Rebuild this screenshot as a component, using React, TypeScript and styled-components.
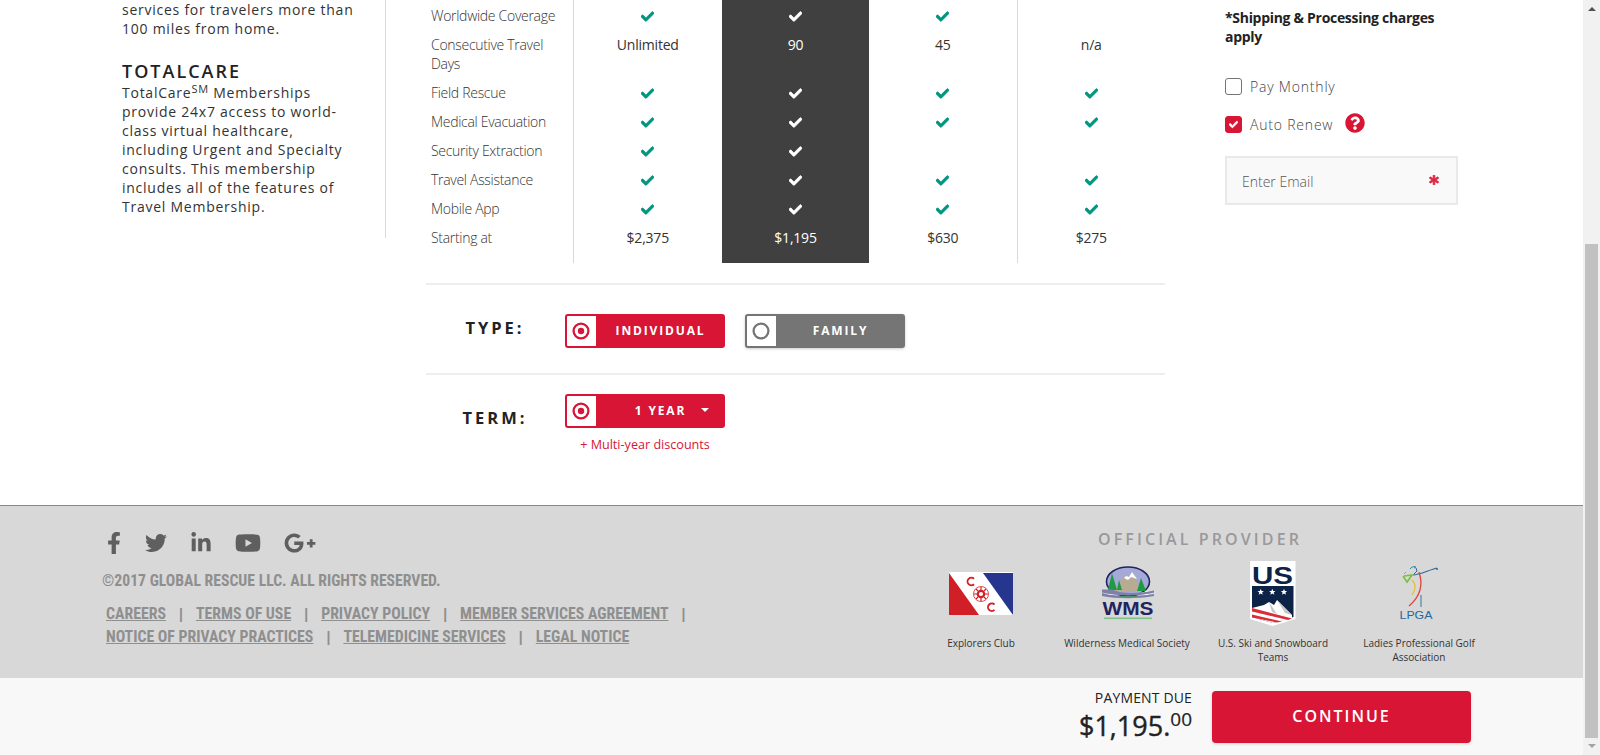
import React from "react";
import styled, { createGlobalStyle } from "styled-components";
import { FaCheck, FaFacebookF, FaTwitter, FaLinkedinIn, FaYoutube, FaGooglePlusG, FaQuestionCircle, FaAsterisk } from "react-icons/fa";

const Global = createGlobalStyle`
  html, body { margin: 0; padding: 0; height: 755px; overflow: hidden; background: #fff; }
  body { font-family: "Open Sans", "Liberation Sans", sans-serif; color: #333; }
  * { box-sizing: border-box; }
`;

const Shell = styled.div`display: flex; width: 1600px; height: 755px; overflow: hidden;`;
const Page = styled.div`display: flex; flex-direction: column; width: 1583px; height: 755px;`;
const Content = styled.main`display: flex; height: 505px; padding-left: 122px; flex: none;`;

const Sidebar = styled.aside`
  width: 264px; height: 238px; padding-right: 27px; border-right: 1px solid #d9d9d9;
  font-size: 14px; line-height: 19px; letter-spacing: 0.75px; color: #333; flex: none;
`;
const SideIntro = styled.p`margin: -0.5px 0 21px;`;
const SideText = styled.p`margin: 0; padding-top: 0.5px;`;
const SideHeading = styled.h3`margin: 0; font-size: 18px; line-height: 24px; font-weight: 600; letter-spacing: 2px; color: #222;`;
const Sm = styled.sup`font-size: 11px; line-height: 0; vertical-align: 5px;`;

const Center = styled.section`width: 739px; margin-left: 40px; flex: none;`;
const Table = styled.table`width: 739px; border-collapse: collapse; table-layout: fixed; margin-bottom: 20px;`;
const Cell = styled.td<{ $dark?: boolean; $line?: boolean }>`
  padding: 4px 4px 6px; font-size: 14px; line-height: 19px; text-align: center; vertical-align: top; height: 29px; letter-spacing: -0.2px;
  color: ${p => (p.$dark ? "#fff" : "#333")};
  background: ${p => (p.$dark ? "#404040" : "transparent")};
  border-left: ${p => (p.$line ? "1px solid #d9d9d9" : "none")};
  svg {
    display: inline-block; vertical-align: -2px; color: ${p => (p.$dark ? "#fff" : "#00967f")};
    stroke: currentColor; stroke-width: 30px;
  }
  tr:first-child & { padding-top: 6px; }
  tr:last-child & { padding-bottom: 16px; }
`;
const LabelCell = styled(Cell)`text-align: left; font-weight: 300; padding-left: 5px; padding-right: 12px; letter-spacing: -0.3px;`;

const OptionRow = styled.div<{ $tall?: boolean }>`
  display: flex; border-top: 2px solid #eee; height: ${p => (p.$tall ? "132px" : "90px")};
  padding-top: ${p => (p.$tall ? "19px" : "29px")};
`;
const OptionLabel = styled.div<{ $drop: number }>`
  width: 139px; padding-right: 1px; padding-top: ${p => p.$drop}px; text-align: center; font-size: 16.5px; line-height: 24px;
  font-weight: 700; letter-spacing: 3px; color: #222;
`;
const Options = styled.div`display: flex; gap: 20px; align-items: flex-start;`;
const OptionStack = styled.div`display: flex; flex-direction: column; align-items: center;`;
const Pill = styled.div<{ $on?: boolean }>`
  display: flex; width: 160px; height: 34px; border-radius: 3px; border: 2px solid ${p => (p.$on ? "#d81535" : "#757575")};
  background: ${p => (p.$on ? "#d81535" : "#757575")}; color: #fff;
  font-size: 12px; font-weight: 700; letter-spacing: 1.85px; line-height: 30px;
  box-shadow: ${p => (p.$on ? "none" : "0 1px 3px rgba(0,0,0,.2)")};
`;
const PillMark = styled.span`width: 29px; height: 30px; background: #fff; display: flex; align-items: center; justify-content: center; flex: none; border-radius: 1px 0 0 1px; padding-right: 1px;`;
const PillText = styled.span`flex: 1; padding-left: 2px; text-align: center; display: flex; justify-content: center; align-items: center; position: relative;`;
const Caret = styled.span`
  position: absolute; right: 14px; top: 12px; width: 0; height: 0;
  border-left: 4px solid transparent; border-right: 4px solid transparent; border-top: 4px solid #fff;
`;
const Discount = styled.div`margin-top: 8px; font-size: 12.6px; line-height: 18px; color: #d81535;`;

const Aside = styled.aside`width: 233px; margin-left: 60px; flex: none; padding-top: 8px; font-size: 14px;`;
const Note = styled.p`margin: 0 0 31px; font-weight: 700; font-size: 14px; line-height: 19px; color: #222; letter-spacing: -0.3px;`;
const CheckRow = styled.div<{ $gap: number }>`display: flex; align-items: center; height: 19px; margin-bottom: ${p => p.$gap}px; font-weight: 300; letter-spacing: 0.8px; color: #444;`;
const Box = styled.span<{ $on?: boolean }>`
  width: 17px; height: 17px; border-radius: 3px; margin-right: 8px; flex: none; display: flex; align-items: center; justify-content: center;
  background: ${p => (p.$on ? "#d81535" : "#fff")}; border: 1px solid ${p => (p.$on ? "#d81535" : "#757575")}; color: #fff;
  svg { stroke: currentColor; stroke-width: 40px; }
`;
const Help = styled.span`display: flex; margin-left: 12px; margin-top: -4px; color: #d81535;`;
const EmailField = styled.div`
  display: flex; align-items: center; justify-content: space-between; width: 233px; height: 49px; padding: 2px 17px 0 15px;
  background: #f9f9f9; border: 2px solid #e9e9e9; font-size: 14px; font-weight: 300; color: #555;
  svg { color: #e0213f; margin-top: -4px; stroke: currentColor; stroke-width: 40px; }
`;

const Footer = styled.footer`display: flex; height: 173px; background: #d8d8d8; border-top: 1px solid #888; flex: none;`;
const FooterLeft = styled.div`width: 908px; padding: 26px 0 0 102px; flex: none;`;
const Social = styled.div`display: flex; align-items: center; height: 22px; margin: 0 0 17px 1px; color: #5f5f5f;`;
const SocialIcon = styled.span<{ $w: number }>`display: flex; width: ${p => p.$w}px; align-items: center;`;
const Copy = styled.div`
  font-family: "Roboto Condensed", "Liberation Sans Narrow", Roboto, sans-serif; font-weight: 700; font-size: 15.7px; line-height: 20px; color: #8f8f8f; margin-bottom: 12px;
`;
const Links = styled.nav`
  display: flex; flex-wrap: wrap; width: 600px; margin-left: 4px;
  font-family: "Roboto Condensed", "Liberation Sans Narrow", Roboto, sans-serif; font-weight: 700; font-size: 15.8px; line-height: 22.5px; color: #8f8f8f;
`;
const FLink = styled.a`text-decoration: underline; color: #8f8f8f;`;
const Sep = styled.span`width: 30px; text-align: center; font-family: "Liberation Sans", sans-serif; font-weight: 700; font-size: 14px; &:last-child { display: none; }`;

const Provider = styled.div`width: 584px; padding-top: 22px; flex: none;`;
const ProviderTitle = styled.div`text-align: center; font-size: 16px; line-height: 22px; font-weight: 600; letter-spacing: 3.1px; color: #999;`;
const Partners = styled.div`display: grid; grid-template-columns: repeat(4, 146px); margin-top: 8px;`;
const Partner = styled.div`display: flex; flex-direction: column; align-items: center; text-align: center; font-size: 10px; line-height: 14px; color: #333; padding: 0 9px;`;
const LogoSlot = styled.div<{ $nudge?: number }>`height: 70px; margin-bottom: 8px; padding-left: ${p => p.$nudge ?? 0}px; display: flex; align-items: center; justify-content: center;`;

const BottomBar = styled.div`
  flex: none; height: 77px; background: #f8f8f8; display: flex; justify-content: flex-end; padding: 13px 112px 0 0; gap: 20px;
`;
const Due = styled.div`text-align: right; color: #222;`;
const DueLabel = styled.div`font-size: 14px; line-height: 15px; letter-spacing: 0.15px; margin-top: -1px;`;
const DueAmount = styled.div`font-size: 27px; line-height: 30px; font-weight: 400; margin-top: 6px; -webkit-text-stroke: 0.4px #222;`;
const DueCents = styled.sup`font-size: 19px; font-weight: 400; line-height: 0; vertical-align: 10px; -webkit-text-stroke: 0.2px #222;`;
const Continue = styled.button`
  width: 259px; height: 52px; border: none; border-radius: 4px; background: #d81535; color: #fff; padding: 0 0 2px;
  font-family: inherit; font-size: 16px; font-weight: 600; letter-spacing: 2px; box-shadow: 0 1px 3px rgba(0,0,0,.15);
`;

const Scrollbar = styled.div`width: 17px; height: 755px; background: #f1f1f1; flex: none; position: relative;`;
const Thumb = styled.div`position: absolute; left: 2px; top: 244px; width: 13px; height: 494px; background: #c1c1c1;`;
const Arrow = styled.div<{ $up?: boolean }>`
  position: absolute; left: 5px; ${p => (p.$up ? "top: 7px" : "bottom: 7px")}; width: 0; height: 0;
  border-left: 4px solid transparent; border-right: 4px solid transparent;
  ${p => (p.$up ? "border-bottom: 4px solid #505050" : "border-top: 4px solid #a3a3a3")};
`;

const Target = ({ color, on }: { color: string; on: boolean }) => (
  <svg width="18" height="18" viewBox="0 0 18 18" aria-hidden="true">
    <circle cx="9" cy="9" r="7.4" fill="none" stroke={color} strokeWidth="2.3" />
    {on && <circle cx="9" cy="9" r="3.2" fill={color} />}
  </svg>
);

const ExplorersLogo = () => (
  <svg width="64" height="43" viewBox="0 0 64 43" aria-hidden="true">
    <rect width="64" height="43" fill="#fff" />
    <polygon points="0,1 30,43 0,43" fill="#d01f26" />
    <polygon points="34,1 64,1 64,43" fill="#26368e" />
    <path d="M25 6.8a3.8 3.8 0 1 0 0 5.4" fill="none" stroke="#d01f26" strokeWidth="1.9" />
    <path d="M45.5 32.5a3.8 3.8 0 1 0 0 5.4" fill="none" stroke="#d01f26" strokeWidth="1.9" />
    <circle cx="32" cy="22" r="7.5" fill="none" stroke="#d01f26" strokeWidth=".8" />
    <circle cx="32" cy="22" r="3.2" fill="none" stroke="#d01f26" strokeWidth="2.2" />
    <path d="M32 15v3M32 26v3M25 22h3M36 22h3M27 17l2 2M35 25l2 2M37 17l-2 2M29 25l-2 2" stroke="#d01f26" strokeWidth="1.2" />
  </svg>
);

const WmsLogo = () => (
  <svg width="54" height="54" viewBox="0 0 54 54" aria-hidden="true">
    <ellipse cx="26" cy="15.5" rx="21.5" ry="14.5" fill="#a4a9d8" stroke="#23235f" strokeWidth="1.6" />
    <polygon points="12,25 22,10 26,12 30,6 40,25" fill="#b7ab93" />
    <polygon points="24,10 27,11 30,6 35,13 29,11 26,14 22,12" fill="#fff" />
    <polygon points="10,7 6,24 15,24" fill="#1f9a45" />
    <polygon points="17,14 15,24 20,24" fill="#1f9a45" />
    <polygon points="39,12 35,25 44,25" fill="#1f9a45" />
    <path d="M6 25c14 5 28 3 40 0v4H6z" fill="#fff" />
    <path d="M0 23.5h10c10 5 30 4 42 1v2C38 30.5 16 30.5 0 26.5z" fill="#7d80a8" />
    <path d="M0 27c14 4 34 4 52 1v2C36 33 14 33 0 30z" fill="#7d80a8" />
    <path d="M14 28.5c8 3 18 3 26 0-6 2-8 3-13 3s-9-1-13-3z" fill="#25a939" />
    <text x="26" y="49" textAnchor="middle" fontFamily="Liberation Sans, sans-serif" fontWeight="700" fontSize="18" textLength="51" lengthAdjust="spacingAndGlyphs" fill="#23235f">WMS</text>
    <rect x="2" y="51.5" width="48" height="1.6" fill="#7cc486" />
  </svg>
);

const Star = ({ x }: { x: number }) => (
  <polygon transform={`translate(${x} 31)`} points="0,-3.2 .9,-1 3.2,-1 1.4,.4 2,2.8 0,1.4 -2,2.8 -1.4,.4 -3.2,-1 -.9,-1" fill="#fff" />
);

const UsLogo = () => (
  <svg width="46" height="65" viewBox="0 0 46 65" aria-hidden="true">
    <path d="M0 0h45.5v58L22.5 65 0 58z" fill="#fff" />
    <text x="22.5" y="22.5" textAnchor="middle" fontFamily="Liberation Sans, sans-serif" fontWeight="700" fontSize="24.5" textLength="41" lengthAdjust="spacingAndGlyphs" fill="#0c2347">US</text>
    <path d="M2 25h41.5v31L22.5 62 2 56z" fill="#0c2347" />
    <Star x={10.7} /><Star x={22.3} /><Star x={34} />
    <path d="M2 47l12-3 5-3 5 3 3-5 15 15v3L22.5 62 2 56z" fill="#fff" />
    <path d="M19 41l8 12-5-2zM27 39l15 15-7-2z" fill="#c8c8c8" />
    <path d="M2 47l40 10.5-4 1.5L2 50.5zM2 53.5l30 7-5 1L2 56.5z" fill="#dc2c35" />
  </svg>
);

const LpgaLogo = () => (
  <svg width="40" height="56" viewBox="0 0 40 56" aria-hidden="true">
    <path d="M14 10c6 0 16-5 24-7" fill="none" stroke="#2a6a9a" strokeWidth="1.2" />
    <circle cx="38" cy="4" r="1" fill="#2a6a9a" />
    <path d="M11 4c1-2 4-3 6-2l-2 1" fill="none" stroke="#2a8aaa" strokeWidth="1" />
    <path d="M17 3l1 3-3 3" fill="none" stroke="#2a6a9a" strokeWidth="1" />
    <path d="M7 7l-2 2" stroke="#7bbf44" strokeWidth="1" />
    <path d="M4 11l4 6 5-7-8 1" fill="none" stroke="#7bbf44" strokeWidth="1.6" />
    <path d="M13 15c4 4 4 10 0 15" fill="none" stroke="#e7bf3c" strokeWidth="1.3" />
    <path d="M20 7c4 12 2 24-10 34" fill="none" stroke="#dc4436" strokeWidth="1.3" />
    <path d="M22 30v12" stroke="#2a6a9a" strokeWidth=".9" />
    <text x="17" y="54" textAnchor="middle" fontFamily="Liberation Sans, sans-serif" fontSize="10" textLength="33" lengthAdjust="spacingAndGlyphs" fill="#1f6aa0">LPGA</text>
  </svg>
);

type Val = string | boolean;
const rows: [string, Val, Val, Val, Val][] = [
  ["Worldwide Coverage", true, true, true, false],
  ["Consecutive Travel Days", "Unlimited", "90", "45", "n/a"],
  ["Field Rescue", true, true, true, true],
  ["Medical Evacuation", true, true, true, true],
  ["Security Extraction", true, true, false, false],
  ["Travel Assistance", true, true, true, true],
  ["Mobile App", true, true, true, true],
  ["Starting at", "$2,375", "$1,195", "$630", "$275"],
];

const show = (v: Val) => (v === true ? <FaCheck size={13} /> : v === false ? null : v);

const linkLines = ["CAREERS", "TERMS OF USE", "PRIVACY POLICY", "MEMBER SERVICES AGREEMENT", "NOTICE OF PRIVACY PRACTICES", "TELEMEDICINE SERVICES", "LEGAL NOTICE"];

export default function App() {
  return (
    <Shell>
      <Global />
      <Page>
        <Content>
          <Sidebar>
            <SideIntro>services for travelers more than 100 miles from home.</SideIntro>
            <SideHeading>TOTALCARE</SideHeading>
            <SideText>TotalCare<Sm>SM</Sm> Memberships provide 24x7 access to world-class virtual healthcare, including Urgent and Specialty consults. This membership includes all of the features of Travel Membership.</SideText>
          </Sidebar>
          <Center>
            <Table>
              <colgroup>
                <col width="147" /><col width="149" /><col width="147" /><col width="148" /><col width="148" />
              </colgroup>
              <tbody>
                {rows.map(r => (
                  <tr key={r[0]}>
                    <LabelCell>{r[0]}</LabelCell>
                    <Cell $line>{show(r[1])}</Cell>
                    <Cell $dark>{show(r[2])}</Cell>
                    <Cell>{show(r[3])}</Cell>
                    <Cell $line>{show(r[4])}</Cell>
                  </tr>
                ))}
              </tbody>
            </Table>
            <OptionRow>
              <OptionLabel $drop={2}>TYPE:</OptionLabel>
              <Options>
                <Pill $on><PillMark><Target color="#d81535" on /></PillMark><PillText>INDIVIDUAL</PillText></Pill>
                <Pill><PillMark><Target color="#757575" on={false} /></PillMark><PillText>FAMILY</PillText></Pill>
              </Options>
            </OptionRow>
            <OptionRow $tall>
              <OptionLabel $drop={12}>TERM:</OptionLabel>
              <OptionStack>
                <Pill $on>
                  <PillMark><Target color="#d81535" on /></PillMark>
                  <PillText>1 YEAR<Caret /></PillText>
                </Pill>
                <Discount>+ Multi-year discounts</Discount>
              </OptionStack>
            </OptionRow>
          </Center>
          <Aside>
            <Note>*Shipping &amp; Processing charges apply</Note>
            <CheckRow $gap={19}><Box />Pay Monthly</CheckRow>
            <CheckRow $gap={22}>
              <Box $on><FaCheck size={9} /></Box>Auto Renew
              <Help><FaQuestionCircle size={20} /></Help>
            </CheckRow>
            <EmailField>Enter Email<FaAsterisk size={10} /></EmailField>
          </Aside>
        </Content>
        <Footer>
          <FooterLeft>
            <Social>
              <SocialIcon $w={42}><FaFacebookF size={22} /></SocialIcon>
              <SocialIcon $w={45}><FaTwitter size={22} /></SocialIcon>
              <SocialIcon $w={45}><FaLinkedinIn size={22} /></SocialIcon>
              <SocialIcon $w={49}><FaYoutube size={26} /></SocialIcon>
              <SocialIcon $w={32}><FaGooglePlusG size={32} /></SocialIcon>
            </Social>
            <Copy>©2017 GLOBAL RESCUE LLC. ALL RIGHTS RESERVED.</Copy>
            <Links>
              {linkLines.map(l => (
                <React.Fragment key={l}>
                  <FLink>{l}</FLink>
                  <Sep>|</Sep>
                </React.Fragment>
              ))}
            </Links>
          </FooterLeft>
          <Provider>
            <ProviderTitle>OFFICIAL PROVIDER</ProviderTitle>
            <Partners>
              <Partner><LogoSlot><ExplorersLogo /></LogoSlot>Explorers Club</Partner>
              <Partner><LogoSlot $nudge={4}><WmsLogo /></LogoSlot>Wilderness Medical Society</Partner>
              <Partner><LogoSlot><UsLogo /></LogoSlot>U.S. Ski and Snowboard Teams</Partner>
              <Partner><LogoSlot><LpgaLogo /></LogoSlot>Ladies Professional Golf Association</Partner>
            </Partners>
          </Provider>
        </Footer>
        <BottomBar>
          <Due>
            <DueLabel>PAYMENT DUE</DueLabel>
            <DueAmount>$1,195.<DueCents>00</DueCents></DueAmount>
          </Due>
          <Continue>CONTINUE</Continue>
        </BottomBar>
      </Page>
      <Scrollbar>
        <Arrow $up />
        <Thumb />
        <Arrow />
      </Scrollbar>
    </Shell>
  );
}
